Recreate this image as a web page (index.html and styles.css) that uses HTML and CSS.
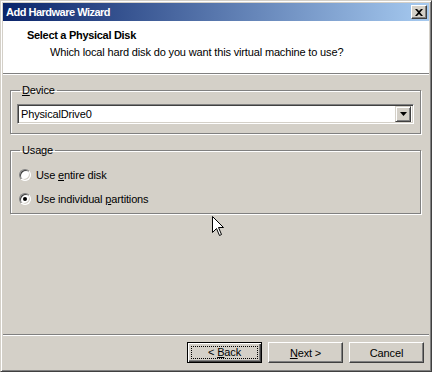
FILE: index.html
```html
<!DOCTYPE html>
<html lang="en">
<head>
  <meta charset="UTF-8" />
  <title>Add Hardware Wizard</title>
  <link rel="stylesheet" href="styles.css">
</head>
<body>
  <div class="window">
    <div class="titlebar">
      <span class="title">Add Hardware Wizard</span>
      <span class="close">
        <svg width="8" height="7" viewBox="0 0 8 7"><path d="M0 0h2l2 2 2-2h2L5 3.5 8 7H6L4 5 2 7H0l3-3.5z" fill="#000"/></svg>
      </span>
    </div>

    <div class="header">
      <h1>Select a Physical Disk</h1>
      <p>Which local hard disk do you want this virtual machine to use?</p>
    </div>

    <div class="content">
      <fieldset class="group device">
        <legend><u>D</u>evice</legend>
        <div class="combo">
          <span class="combo-text">PhysicalDrive0</span>
          <span class="combo-btn">
            <svg width="7" height="4" viewBox="0 0 7 4"><path d="M0 0h7L3.5 4z" fill="#000"/></svg>
          </span>
        </div>
      </fieldset>

      <fieldset class="group usage">
        <legend>Usage</legend>
        <label class="option"><span class="radio"></span><span>Use <u>e</u>ntire disk</span></label>
        <label class="option"><span class="radio checked"></span><span>Use individual <u>p</u>artitions</span></label>
      </fieldset>
    </div>

    <div class="footer">
      <button class="btn default"><span class="focus">&lt; <u>B</u>ack</span></button>
      <button class="btn"><u>N</u>ext &gt;</button>
      <button class="btn">Cancel</button>
    </div>

    <svg class="cursor" width="13" height="21" viewBox="0 0 13 21">
      <path d="M0.5 0.5V16.5L4.5 12.5L7.5 19.5L9.5 18.5L6.5 11.5H11.5Z" fill="#fff" stroke="#000" stroke-width="1"/>
    </svg>
  </div>
</body>
</html>
```

FILE: styles.css
```css
body {
  margin: 0;
  font-family: "Liberation Sans", Arial, sans-serif;
  font-size: 11px;
  letter-spacing: -0.15px;
  color: #000;
  background: #d4d0c8;
}

.window {
  position: relative;
  box-sizing: border-box;
  width: 432px;
  height: 372px;
  display: flex;
  flex-direction: column;
  background: #d4d0c8;
  border: 1px solid;
  border-color: #d4d0c8 #404040 #404040 #d4d0c8;
  box-shadow: inset 1px 1px #fff, inset -1px -1px #808080;
  padding: 2px;
}

.titlebar {
  height: 18px;
  display: flex;
  align-items: center;
  justify-content: space-between;
  padding: 0 2px 0 3px;
  background: linear-gradient(to right, #0a246a, #a6caf0);
  color: #fff;
  font-weight: bold;
  font-size: 11px;
  letter-spacing: -0.5px;
}

.close {
  box-sizing: border-box;
  width: 16px;
  height: 14px;
  display: flex;
  align-items: center;
  justify-content: center;
  background: #d4d0c8;
  border: 1px solid;
  border-color: #fff #404040 #404040 #fff;
  box-shadow: inset -1px -1px #808080;
}

.header {
  height: 53px;
  box-sizing: border-box;
  background: #fff;
  padding-top: 8px;
  border-bottom: 1px solid #808080;
}

.header h1 {
  margin: 0;
  padding-left: 24px;
  font-size: 11px;
  line-height: 13px;
  letter-spacing: -0.3px;
}

.header p {
  margin: 4px 0 0;
  padding-left: 47px;
  line-height: 13px;
}

.content {
  flex: 1;
  border-top: 1px solid #fff;
  padding: 0 8px 0 7px;
}

.group {
  margin: 0;
  border: 1px solid #808080;
  box-shadow: inset 1px 1px #fff, 1px 1px #fff;
  padding: 0 6px;
}

.group legend {
  padding: 0 2px;
  margin-left: 3px;
  line-height: 13px;
}

.device {
  margin-top: 9px;
  padding-top: 7px;
  padding-bottom: 9px;
}

.usage {
  margin-top: 10px;
  padding-top: 6px;
  padding-bottom: 2px;
}

.combo {
  box-sizing: border-box;
  height: 20px;
  display: flex;
  align-items: center;
  justify-content: space-between;
  background: #fff;
  border: 1px solid;
  border-color: #808080 #fff #fff #808080;
  box-shadow: inset 1px 1px #404040, inset -1px -1px #d4d0c8;
  padding: 2px;
}

.combo-text {
  padding-left: 1px;
}

.combo-btn {
  box-sizing: border-box;
  width: 16px;
  height: 16px;
  display: flex;
  align-items: center;
  justify-content: center;
  background: #d4d0c8;
  border: 1px solid;
  border-color: #d4d0c8 #404040 #404040 #d4d0c8;
  box-shadow: inset 1px 1px #fff, inset -1px -1px #808080;
}

.option {
  display: flex;
  align-items: center;
  gap: 5px;
  height: 24px;
  padding-left: 2px;
}

.radio {
  position: relative;
  box-sizing: border-box;
  width: 12px;
  height: 12px;
  border-radius: 50%;
  background: #fff;
  border: 1px solid;
  border-color: #808080 #fff #fff #808080;
  box-shadow: inset 1px 1px #404040, inset -1px -1px #d4d0c8;
}

.radio.checked::after {
  content: "";
  position: absolute;
  left: 3px;
  top: 3px;
  width: 4px;
  height: 4px;
  border-radius: 50%;
  background: #000;
}

.footer {
  height: 35px;
  box-sizing: border-box;
  border-top: 1px solid #808080;
  box-shadow: inset 0 1px #fff;
  padding: 7px 5px 0 0;
  display: flex;
  justify-content: flex-end;
  gap: 6px;
}

.btn {
  box-sizing: border-box;
  width: 75px;
  height: 21px;
  padding: 0;
  font: inherit;
  letter-spacing: inherit;
  color: #000;
  background: #d4d0c8;
  border: 1px solid;
  border-color: #fff #404040 #404040 #fff;
  box-shadow: inset -1px -1px #808080;
}

.btn.default {
  border: 1px solid #000;
  box-shadow: inset 1px 1px #fff, inset -1px -1px #404040, inset -2px -2px #808080;
  padding: 3px;
}

.focus {
  display: block;
  height: 100%;
  box-sizing: border-box;
  border: 1px dotted #000;
  line-height: 11px;
}

.cursor {
  position: absolute;
  left: 211px;
  top: 215px;
}
```
